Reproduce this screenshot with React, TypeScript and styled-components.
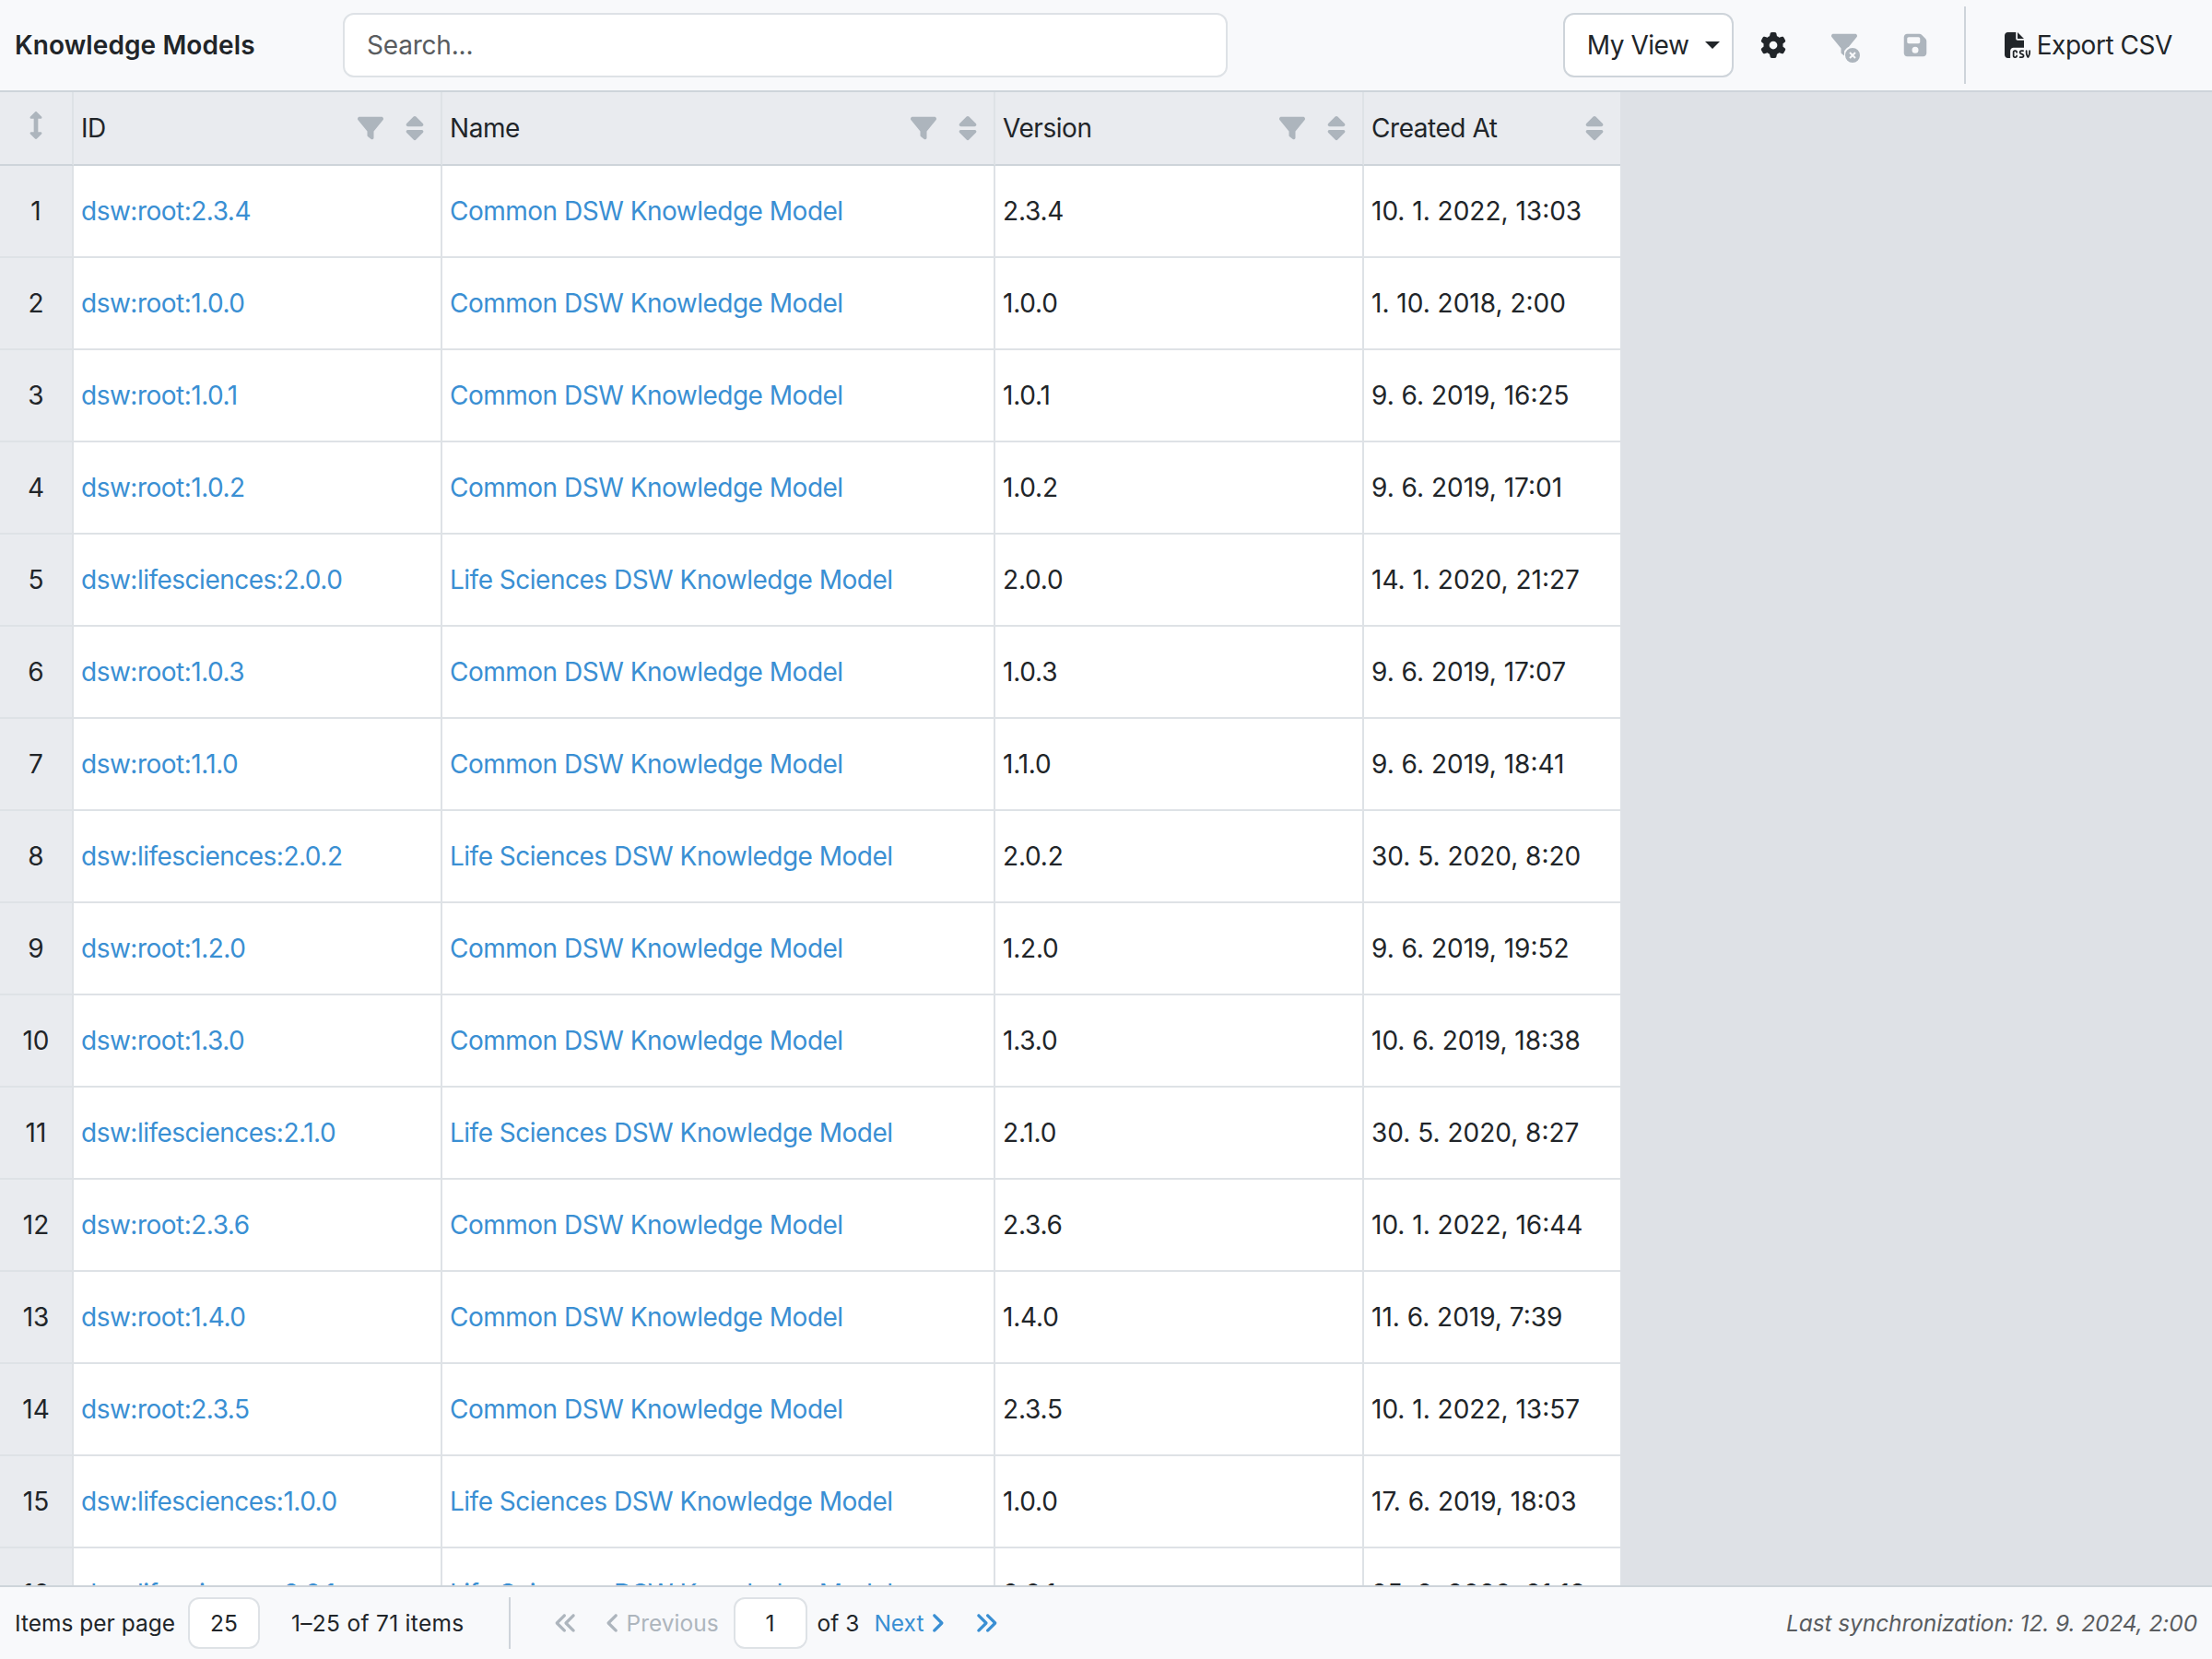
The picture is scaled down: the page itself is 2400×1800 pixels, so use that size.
import * as React from 'react';
import styled, { createGlobalStyle } from 'styled-components';
import {
  FaAnglesLeft,
  FaAnglesRight,
  FaAngleLeft,
  FaAngleRight,
  FaGear,
  FaFileCsv,
  FaFilter,
  FaFloppyDisk,
  FaSort,
} from 'react-icons/fa6';
import { FaArrowsAltV } from 'react-icons/fa';

const GlobalStyle = createGlobalStyle`
  html, body {
    margin: 0;
    padding: 0;
  }
  body {
    font-family: Inter, "Liberation Sans", sans-serif;
    font-size: 28px;
    letter-spacing: -0.45px;
    color: #212529;
  }
`;

const Page = styled.div`
  width: 100%;
  height: 100vh;
  display: flex;
  flex-direction: column;
  background: #dee1e6;
  overflow: hidden;
`;

const Toolbar = styled.div`
  box-sizing: border-box;
  height: 100px;
  flex: none;
  display: flex;
  align-items: center;
  padding: 0 16px 0 16px;
  background: #f8f9fb;
  border-bottom: 2px solid #ced4da;
`;

const Title = styled.div`
  width: 356px;
  font-weight: 600;
  letter-spacing: 0.1px;
  flex: none;
`;

const SearchInput = styled.input`
  box-sizing: border-box;
  width: 960px;
  height: 70px;
  padding: 0 24px;
  font: inherit;
  letter-spacing: -0.2px;
  color: #212529;
  background: #fff;
  border: 2px solid #dee2e6;
  border-radius: 12px;
  margin-right: auto;
  &::placeholder {
    color: #595c5f;
    opacity: 1;
  }
`;

const ViewSelect = styled.div`
  box-sizing: border-box;
  width: 185px;
  height: 70px;
  padding: 0 13px 0 24px;
  display: flex;
  align-items: center;
  justify-content: space-between;
  background: #fff;
  border: 2px solid #ced4da;
  border-radius: 12px;
  margin-right: 5px;
`;

const Caret = styled.span`
  width: 0;
  height: 0;
  border-top: 8px solid #212529;
  border-left: 8px solid transparent;
  border-right: 8px solid transparent;
`;

const ToolButton = styled.div<{ $off?: boolean }>`
  position: relative;
  width: 77px;
  height: 70px;
  display: flex;
  align-items: center;
  justify-content: center;
  color: ${p => (p.$off ? '#adb5bd' : '#212529')};
`;

const ClearBadge = styled.svg`
  position: absolute;
  left: 38px;
  top: 37px;
`;

const ToolDivider = styled.div`
  width: 2px;
  height: 84px;
  margin: 0 42px 0 14px;
  background: #ced4da;
`;

const ExportButton = styled.div`
  display: flex;
  align-items: center;
  gap: 7px;
  margin-right: 27px;
`;

const GridArea = styled.div`
  flex: 1;
  min-height: 0;
  overflow: hidden;
`;

const Table = styled.table`
  width: 1758px;
  table-layout: fixed;
  border-collapse: separate;
  border-spacing: 0;
`;

const HeadCell = styled.th`
  box-sizing: border-box;
  height: 80px;
  padding: 0 8px;
  font-weight: 400;
  text-align: left;
  background: #e9ebef;
  border-right: 2px solid #dee2e6;
  border-bottom: 2px solid #ced4da;
  &:last-child {
    border-right: 0;
  }
`;

const HeadInner = styled.div`
  display: flex;
  align-items: center;
  color: #212529;
`;

const HeadLabel = styled.span`
  flex: 1;
`;

const HeadIcons = styled.span`
  display: flex;
  align-items: center;
  gap: 19px;
  margin-right: 5px;
  color: #adb5bd;
`;

const IndexHead = styled(HeadCell)`
  text-align: center;
  color: #adb5bd;
`;

const Cell = styled.td`
  box-sizing: border-box;
  height: 100px;
  padding: 0 8px;
  background: #fff;
  border-right: 2px solid #dee2e6;
  border-bottom: 2px solid #dee2e6;
  white-space: nowrap;
  overflow: hidden;
  &:last-child {
    border-right: 0;
  }
`;

const IndexCell = styled(Cell)`
  text-align: center;
  background: #e9ebef;
  letter-spacing: 0;
`;

const VersionCell = styled(Cell)`
  letter-spacing: -0.2px;
`;

const DateCell = styled(Cell)`
  letter-spacing: 0;
`;

const Link = styled.a`
  color: #3a8fd3;
  letter-spacing: -0.5px;
  text-decoration: none;
`;

const Footer = styled.div`
  box-sizing: border-box;
  height: 80px;
  flex: none;
  display: flex;
  align-items: center;
  padding: 0 16px;
  font-size: 24.5px;
  letter-spacing: 0;
  background: #f8f9fb;
  border-top: 2px solid #ced4da;
`;

const SmallInput = styled.div<{ $width: number }>`
  box-sizing: border-box;
  width: ${p => p.$width}px;
  height: 56px;
  display: flex;
  align-items: center;
  justify-content: center;
  background: #fff;
  border: 2px solid #dee2e6;
  border-radius: 12px;
`;

const ItemCount = styled.span`
  letter-spacing: 0.3px;
`;

const FootDivider = styled.div`
  width: 2px;
  height: 56px;
  margin: 0 47px 0 48px;
  background: #ced4da;
`;

const PageLink = styled.span<{ $off?: boolean }>`
  display: flex;
  align-items: center;
  gap: 2px;
  color: ${p => (p.$off ? '#adb5bd' : '#3a8fd3')};
`;

const Gap = styled.span<{ $w: number }>`
  flex: none;
  width: ${p => p.$w}px;
`;

const Sync = styled.span`
  margin-left: auto;
  font-style: italic;
  letter-spacing: -0.1px;
  color: #595c5f;
`;

interface IPackage {
  id: string;
  name: string;
  version: string;
  created: string;
}

const COMMON = 'Common DSW Knowledge Model';
const LIFE = 'Life Sciences DSW Knowledge Model';

const packages: IPackage[] = [
  { id: 'dsw:root:2.3.4', name: COMMON, version: '2.3.4', created: '10. 1. 2022, 13:03' },
  { id: 'dsw:root:1.0.0', name: COMMON, version: '1.0.0', created: '1. 10. 2018, 2:00' },
  { id: 'dsw:root:1.0.1', name: COMMON, version: '1.0.1', created: '9. 6. 2019, 16:25' },
  { id: 'dsw:root:1.0.2', name: COMMON, version: '1.0.2', created: '9. 6. 2019, 17:01' },
  { id: 'dsw:lifesciences:2.0.0', name: LIFE, version: '2.0.0', created: '14. 1. 2020, 21:27' },
  { id: 'dsw:root:1.0.3', name: COMMON, version: '1.0.3', created: '9. 6. 2019, 17:07' },
  { id: 'dsw:root:1.1.0', name: COMMON, version: '1.1.0', created: '9. 6. 2019, 18:41' },
  { id: 'dsw:lifesciences:2.0.2', name: LIFE, version: '2.0.2', created: '30. 5. 2020, 8:20' },
  { id: 'dsw:root:1.2.0', name: COMMON, version: '1.2.0', created: '9. 6. 2019, 19:52' },
  { id: 'dsw:root:1.3.0', name: COMMON, version: '1.3.0', created: '10. 6. 2019, 18:38' },
  { id: 'dsw:lifesciences:2.1.0', name: LIFE, version: '2.1.0', created: '30. 5. 2020, 8:27' },
  { id: 'dsw:root:2.3.6', name: COMMON, version: '2.3.6', created: '10. 1. 2022, 16:44' },
  { id: 'dsw:root:1.4.0', name: COMMON, version: '1.4.0', created: '11. 6. 2019, 7:39' },
  { id: 'dsw:root:2.3.5', name: COMMON, version: '2.3.5', created: '10. 1. 2022, 13:57' },
  { id: 'dsw:lifesciences:1.0.0', name: LIFE, version: '1.0.0', created: '17. 6. 2019, 18:03' },
  { id: 'dsw:lifesciences:2.0.1', name: LIFE, version: '2.0.1', created: '25. 2. 2020, 21:18' },
];

function ColumnIcons({ filter = true }: { filter?: boolean }) {
  return (
    <HeadIcons>
      {filter && <FaFilter size={28} />}
      <FaSort size={30} />
    </HeadIcons>
  );
}

export default function App() {
  return (
    <>
      <GlobalStyle />
      <Page>
        <Toolbar>
          <Title>Knowledge Models</Title>
          <SearchInput placeholder="Search..." />
          <ViewSelect>
            My View
            <Caret />
          </ViewSelect>
          <ToolButton>
            <FaGear size={28} />
          </ToolButton>
          <ToolButton $off>
            <FaFilter size={28} />
            <ClearBadge width="18" height="18" viewBox="0 0 18 18">
              <circle cx="9" cy="9" r="9" fill="#adb5bd" stroke="#f8f9fb" strokeWidth="2" />
              <path d="M6 6l6 6M12 6l-6 6" stroke="#f8f9fb" strokeWidth="2" />
            </ClearBadge>
          </ToolButton>
          <ToolButton $off>
            <FaFloppyDisk size={28} />
          </ToolButton>
          <ToolDivider />
          <ExportButton>
            <FaFileCsv size={28} />
            Export CSV
          </ExportButton>
        </Toolbar>
        <GridArea>
          <Table>
            <colgroup>
              <col width={80} />
              <col width={400} />
              <col width={600} />
              <col width={400} />
              <col width={278} />
            </colgroup>
            <thead>
              <tr>
                <IndexHead>
                  <FaArrowsAltV size={30} />
                </IndexHead>
                <HeadCell>
                  <HeadInner>
                    <HeadLabel>ID</HeadLabel>
                    <ColumnIcons />
                  </HeadInner>
                </HeadCell>
                <HeadCell>
                  <HeadInner>
                    <HeadLabel>Name</HeadLabel>
                    <ColumnIcons />
                  </HeadInner>
                </HeadCell>
                <HeadCell>
                  <HeadInner>
                    <HeadLabel>Version</HeadLabel>
                    <ColumnIcons />
                  </HeadInner>
                </HeadCell>
                <HeadCell>
                  <HeadInner>
                    <HeadLabel>Created At</HeadLabel>
                    <ColumnIcons filter={false} />
                  </HeadInner>
                </HeadCell>
              </tr>
            </thead>
            <tbody>
              {packages.map((pkg, i) => (
                <tr key={pkg.id}>
                  <IndexCell>{i + 1}</IndexCell>
                  <Cell>
                    <Link>{pkg.id}</Link>
                  </Cell>
                  <Cell>
                    <Link>{pkg.name}</Link>
                  </Cell>
                  <VersionCell>{pkg.version}</VersionCell>
                  <DateCell>{pkg.created}</DateCell>
                </tr>
              ))}
            </tbody>
          </Table>
        </GridArea>
        <Footer>
          Items per page
          <Gap $w={14} />
          <SmallInput $width={78}>25</SmallInput>
          <Gap $w={34} />
          <ItemCount>1–25 of 71 items</ItemCount>
          <FootDivider />
          <PageLink $off>
            <FaAnglesLeft size={26} />
          </PageLink>
          <Gap $w={25} />
          <PageLink $off>
            <FaAngleLeft size={26} />
            Previous
          </PageLink>
          <Gap $w={16} />
          <SmallInput $width={80}>1</SmallInput>
          <Gap $w={11} />
          of 3
          <Gap $w={16} />
          <PageLink>
            Next
            <FaAngleRight size={26} />
          </PageLink>
          <Gap $w={27} />
          <PageLink>
            <FaAnglesRight size={26} />
          </PageLink>
          <Sync>Last synchronization: 12. 9. 2024, 2:00</Sync>
        </Footer>
      </Page>
    </>
  );
}
